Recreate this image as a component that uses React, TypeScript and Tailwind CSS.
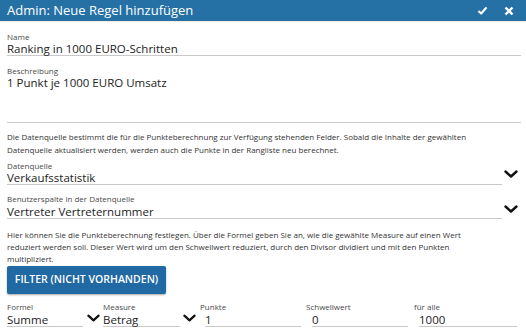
import React from "react";

const font = { fontFamily: '"Open Sans", "Noto Sans", sans-serif' };

function Chevron({ className = "" }: { className?: string }) {
  return (
    <svg viewBox="0 0 14 8" className={className} fill="none">
      <polyline points="1.5,1.5 7,6.5 12.5,1.5" stroke="#111" strokeWidth="2.4" strokeLinecap="round" strokeLinejoin="round" />
    </svg>
  );
}

function Label({ children }: { children: React.ReactNode }) {
  return <div className="text-[8px] leading-[10px] h-[10px] text-[#4a4a4a] whitespace-nowrap">{children}</div>;
}

export default function App() {
  return (
    <div className="w-[526px] h-[334px] bg-white overflow-hidden text-[#222]" style={font}>
      {/* header */}
      <div className="h-[22px] bg-[#2570a5] flex items-center justify-between pl-[7px] pr-[12px] border-b border-[#f3ece2]">
        <span className="text-white text-[13px] leading-none">Admin: Neue Regel hinzufügen</span>
        <div className="flex items-center gap-[16px]">
          <svg viewBox="0 0 12 10" className="w-[11px] h-[9px]">
            <polyline points="1.5,5.5 4.5,8.3 10.5,1.5" stroke="white" strokeWidth="2.4" fill="none" strokeLinejoin="round" />
          </svg>
          <svg viewBox="0 0 10 10" className="w-[10px] h-[10px]">
            <path d="M1.5 1.5 L8.5 8.5 M8.5 1.5 L1.5 8.5" stroke="white" strokeWidth="2.4" />
          </svg>
        </div>
      </div>

      <div className="pl-[7px] pr-[5px] pt-[10px]">
        {/* Name */}
        <Label>Name</Label>
        <div className="text-[11.5px] leading-[14px] h-[14px] border-b border-[#c9c9c9]">Ranking in 1000 EURO-Schritten</div>

        {/* Beschreibung */}
        <div className="mt-[10px]">
          <Label>Beschreibung</Label>
          <div className="text-[11.5px] leading-[14px] h-[47px] border-b border-[#c9c9c9]">1 Punkt je 1000 EURO Umsatz</div>
        </div>

        <p className="mt-[7px] text-[8px] leading-[13px] text-[#333] whitespace-nowrap">
          Die Datenquelle bestimmt die für die Punkteberechnung zur Verfügung stehenden Felder. Sobald die Inhalte der gewählten
          <br />
          Datenquelle aktualisiert werden, werden auch die Punkte in der Rangliste neu berechnet.
        </p>

        {/* Datenquelle */}
        <div className="mt-[5px] flex items-end pr-[3px]">
          <div className="flex-1">
            <Label>Datenquelle</Label>
            <div className="text-[11.5px] leading-[13px] h-[14px] border-b border-[#c9c9c9]">Verkaufsstatistik</div>
          </div>
          <Chevron className="w-[14px] h-[8px] ml-[2px] mb-[7px]" />
        </div>

        {/* Benutzerspalte */}
        <div className="mt-[9px] flex items-end pr-[3px]">
          <div className="flex-1">
            <Label>Benutzerspalte in der Datenquelle</Label>
            <div className="text-[11.5px] leading-[15px] h-[15px] border-b border-[#c9c9c9]">Vertreter Vertreternummer</div>
          </div>
          <Chevron className="w-[14px] h-[8px] ml-[2px] mb-[6px]" />
        </div>

        <p className="mt-[10px] text-[8px] leading-[12px] text-[#333] whitespace-nowrap">
          Hier können Sie die Punkteberechnung festlegen. Über die Formel geben Sie an, wie die gewählte Measure auf einen Wert
          <br />
          reduziert werden soll. Dieser Wert wird um den Schwellwert reduziert, durch den Divisor dividiert und mit den Punkten
          <br />
          multipliziert.
        </p>

        <button className="mt-[1px] h-[28px] w-[159px] bg-[#2069a3] text-white text-[10.5px] font-semibold rounded-[2px] shadow-[0_1px_2px_rgba(0,0,0,0.35)]">
          FILTER (NICHT VORHANDEN)
        </button>

        {/* bottom row */}
        <div className="mt-[8px] flex items-end">
          <div className="w-[76px]">
            <Label>Formel</Label>
            <div className="text-[11.5px] leading-[15px] h-[15px] border-b border-[#c9c9c9]">Summe</div>
          </div>
          <Chevron className="w-[13px] h-[8px] ml-[4px] mr-[3px] mb-[5px]" />
          <div className="w-[77px]">
            <Label>Measure</Label>
            <div className="text-[11.5px] leading-[15px] h-[15px] border-b border-[#c9c9c9]">Betrag</div>
          </div>
          <Chevron className="w-[13px] h-[8px] ml-[3px] mr-[4px] mb-[5px]" />
          <div className="w-[101px]">
            <Label>Punkte</Label>
            <div className="ml-[5px] text-[11.5px] leading-[15px] h-[15px] border-b border-[#c9c9c9]">1</div>
          </div>
          <div className="w-[102px] ml-[5px]">
            <Label>Schwellwert</Label>
            <div className="ml-[6px] text-[11.5px] leading-[15px] h-[15px] border-b border-[#c9c9c9]">0</div>
          </div>
          <div className="w-[103px] ml-[6px]">
            <Label>für alle</Label>
            <div className="ml-[5px] text-[11.5px] leading-[15px] h-[15px] border-b border-[#c9c9c9]">1000</div>
          </div>
        </div>
      </div>
    </div>
  );
}
